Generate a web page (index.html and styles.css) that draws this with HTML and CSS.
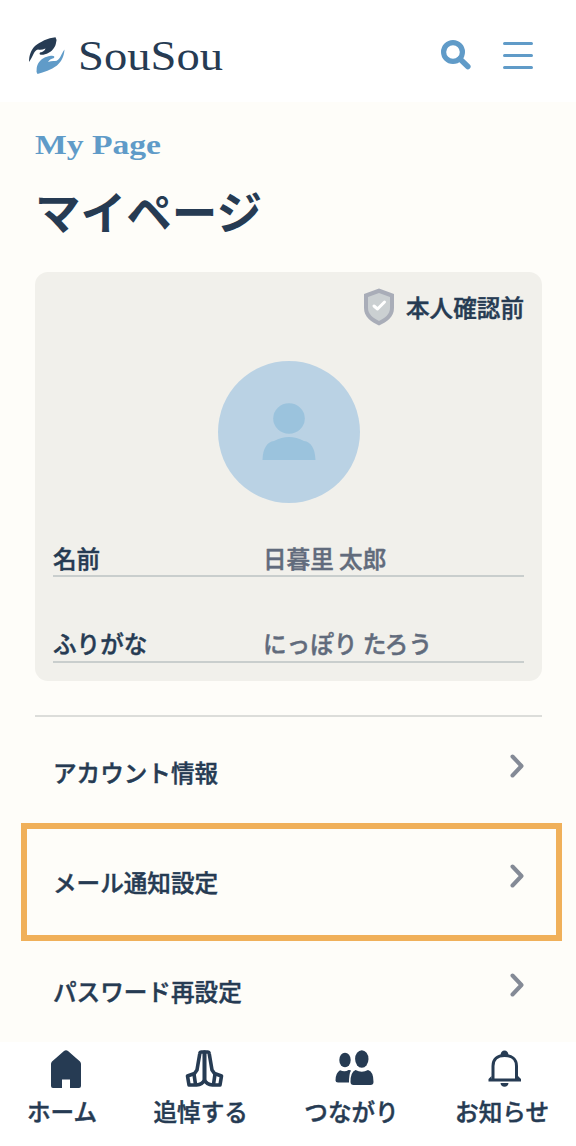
FILE: index.html
```html
<!DOCTYPE html>
<html lang="ja">
<head>
<meta charset="utf-8">
<title>マイページ | SouSou</title>
<link rel="stylesheet" href="styles.css">
</head>
<body>
<div class="app">
  <header class="header">
    <svg class="logo" width="204" height="50" viewBox="0 0 204 50">
      <path fill="#263b53" d="M1 31C1 24 3 19 7 15C12 11 20 7 27.500 6.300Q29 8 28 12C27 18 22 22 17 23.300C13 24.500 10.500 23.500 12 21.500Q16.500 20.500 17.500 17.500Q13 19.500 10 18.500C6 19 5 26 1 31Z"/>
      <path fill="#609bc8" d="M36.500 18.500C36 26 33 31 29 34.500C23 39 16 41 9.500 43Q8 41 8.700 37C9.500 31 14 27 19 25.700C24 24 27.500 24.500 26 27Q21.500 28 20 31Q24 29.500 27 30C32 30 33 23 36.500 18.500Z"/>
      <text class="logo-text" x="50" y="38.500" textLength="145" lengthAdjust="spacingAndGlyphs">SouSou</text>
    </svg>
    <div class="actions">
      <svg width="32" height="32" viewBox="0 0 32 32" fill="none" stroke="#609bc8">
        <circle cx="13" cy="13" r="9.4" stroke-width="5.2"/>
        <path d="M20 20L27.800 27.500" stroke-width="5.6" stroke-linecap="round"/>
      </svg>
      <svg width="30" height="32" viewBox="0 0 30 32" stroke="#609bc8" stroke-width="3" stroke-linecap="round">
        <path d="M1.5 4.5H28.5M1.5 16.5H28.5M1.5 28.5H28.5"/>
      </svg>
    </div>
  </header>
  <main class="main">
    <svg class="eyebrow" width="140" height="40" viewBox="0 0 140 40">
      <text class="eyebrow-text" x="0" y="24" textLength="126" lengthAdjust="spacingAndGlyphs">My Page</text>
    </svg>
    <h1 class="title">マイページ</h1>
    <section class="card">
      <div class="status">
        <svg width="30" height="38" viewBox="0 0 30 38">
          <path fill="#a9adb8" d="M15 .5L30 6V20C30 29 23 34 15 37.5C7 34 0 29 0 20V6Z"/>
          <path fill="#cbd0d2" d="M15 5L26 9V20C26 26 21 30 15 33C9 30 4 26 4 20V9Z"/>
          <path d="M10 18L13.5 21L20.5 14" fill="none" stroke="#fff" stroke-width="3" stroke-linecap="round" stroke-linejoin="round"/>
        </svg>
        <span>本人確認前</span>
      </div>
      <svg class="avatar" width="142" height="142" viewBox="0 0 142 142">
        <circle cx="71" cy="71" r="71" fill="#bad2e4"/>
        <ellipse cx="71" cy="57.5" rx="15.8" ry="15.2" fill="#9bc3dd"/>
        <path fill="#9bc3dd" d="M44.5 99C45 87 49 81 56 80Q71 72 86 80C93 81 97 87 97.500 99Z"/>
      </svg>
      <dl class="profile">
        <div class="field"><dt>名前</dt><dd>日暮里 太郎</dd></div>
        <div class="field"><dt>ふりがな</dt><dd>にっぽり たろう</dd></div>
      </dl>
    </section>
    <nav class="menu">
      <a class="item"><span>アカウント情報</span><svg class="chevron" viewBox="0 0 14 24"><path d="M2.500 2.500L11.500 12L2.500 21.500"/></svg></a>
      <a class="item selected"><span>メール通知設定</span><svg class="chevron" viewBox="0 0 14 24"><path d="M2.500 2.500L11.500 12L2.500 21.500"/></svg></a>
      <a class="item"><span>パスワード再設定</span><svg class="chevron" viewBox="0 0 14 24"><path d="M2.500 2.500L11.500 12L2.500 21.500"/></svg></a>
    </nav>
  </main>
  <nav class="tabs">
    <a class="tab">
      <svg width="40" height="40" viewBox="0 0 40 40"><path fill="#263b53" d="M18 1Q20 -.5 22 1L34 11.500Q35 12.500 35 14V36Q35 38 33 38H24V29.500H16V38H7Q5 38 5 36V14Q5 12.500 6 11.500Z"/></svg>
      <span>ホーム</span>
    </a>
    <a class="tab">
      <svg width="40" height="40" viewBox="0 0 40 40" fill="none" stroke="#263b53" stroke-width="3.600" stroke-linejoin="round">
        <path d="M19.500 30V2H16.500Q15 2 14.800 3.500L12 20L9.500 23.500L2.500 26L4 35H11.500Q17.500 34.500 19.500 30"/>
        <path d="M19.500 30V2H22.500Q24 2 24.200 3.500L27 20L29.500 23.500L36.500 26L35 35H27.500Q21.500 34.500 19.500 30"/>
        <path d="M9 24L10.500 34.500M30 24L28.500 34.500"/>
      </svg>
      <span>追悼する</span>
    </a>
    <a class="tab">
      <svg width="40" height="40" viewBox="-.5 0 40 40" fill="#263b53">
        <ellipse cx="9.500" cy="10" rx="5.700" ry="7.300"/>
        <ellipse cx="26.300" cy="9" rx="6.700" ry="8.700"/>
        <path d="M4.500 20.300Q9.500 22.500 13 20Q14.500 19.700 15.500 20.500Q13.500 24 13.500 32.500H2.500Q0 32.500 0 30.500Q0 23 4.500 20.300Z"/>
        <path d="M20 20Q26.300 23.500 32.500 20Q38 21.500 38 32Q38 35 35 35H18Q15 35 15 32Q15 22 20 20Z"/>
      </svg>
      <span>つながり</span>
    </a>
    <a class="tab">
      <svg width="40" height="40" viewBox="1.500 0 40 40">
        <path d="M8.500 30V16C8.500 9 13 5.500 20 5.500S32 9 32 16V30" fill="none" stroke="#263b53" stroke-width="3"/>
        <path fill="#263b53" d="M16 5Q16.500 .5 20 .5T24 5ZM7 26L4 29V31.500H36.500V29L33.500 26V28.500H7ZM16 33H24Q23.500 36.800 20 36.800T16 33Z"/>
      </svg>
      <span>お知らせ</span>
    </a>
  </nav>
</div>
</body>
</html>
```
FILE: styles.css
```css
* { box-sizing: border-box; }
body {
  margin: 0;
  background: #fefdf9;
  color: #263b53;
  font-family: "Noto Sans CJK JP", sans-serif;
  font-size: 23.6px;
  font-weight: 500;
  line-height: 34px;
  -webkit-text-stroke: .45px currentColor;
}
.app { display: flex; flex-direction: column; height: 1146px; overflow: hidden; }
.header {
  flex: none;
  display: flex;
  justify-content: space-between;
  height: 102px;
  padding: 31px 43px 0 28px;
  background: #fff;
}
.logo-text { font: 43px "Liberation Serif", serif; fill: #263b53; }
.actions { display: flex; gap: 31px; padding-top: 8px; }
.main { flex: 1; min-height: 0; padding: 28px 34px 0 35px; overflow: hidden; }
.eyebrow { display: block; -webkit-text-stroke: 0; }
.eyebrow-text { font: bold 27px "Liberation Serif", serif; fill: #609bc8; }
.title {
  margin: 10px 0 0;
  font-size: 45.6px;
  line-height: 60px;
  font-weight: 700;
  -webkit-text-stroke: 0;
}
.card {
  height: 409px;
  margin-top: 32px;
  padding: 16px 18px 0;
  border-radius: 13px;
  background: #f1f0eb;
}
.status { display: flex; justify-content: flex-end; align-items: center; gap: 12px; height: 38px; }
.avatar { display: block; margin: 35px auto 0; }
.profile { margin: 38px 0 0; }
.field { display: flex; height: 36px; border-bottom: 2px solid #c9cecd; }
.field + .field { margin-top: 50px; line-height: 32px; }
.field dt { width: 210px; }
.field dd { margin: 0; color: #616b7c; }
.menu { margin-top: 34px; border-top: 2px solid #dcddda; }
.item {
  display: flex;
  justify-content: space-between;
  height: 106px;
  padding: 37px 18px 0;
}
.item span { padding-top: 1px; }
.item.selected {
  height: 118px;
  margin: 0 -20px 0 -14px;
  padding: 35px 32px 0 26px;
  border: 6px solid #f0b05a;
}
.item:last-child { padding-top: 32px; }
.chevron { width: 14px; height: 24px; fill: none; stroke: #848a96; stroke-width: 4; stroke-linecap: round; stroke-linejoin: round; }
.tabs {
  flex: none;
  display: flex;
  justify-content: space-between;
  height: 104px;
  padding: 8px 27px 0 27px;
  background: #fff;
}
.tab { display: flex; flex-direction: column; align-items: center; line-height: 42px; }
.tab svg { margin-left: 8px; }
```
